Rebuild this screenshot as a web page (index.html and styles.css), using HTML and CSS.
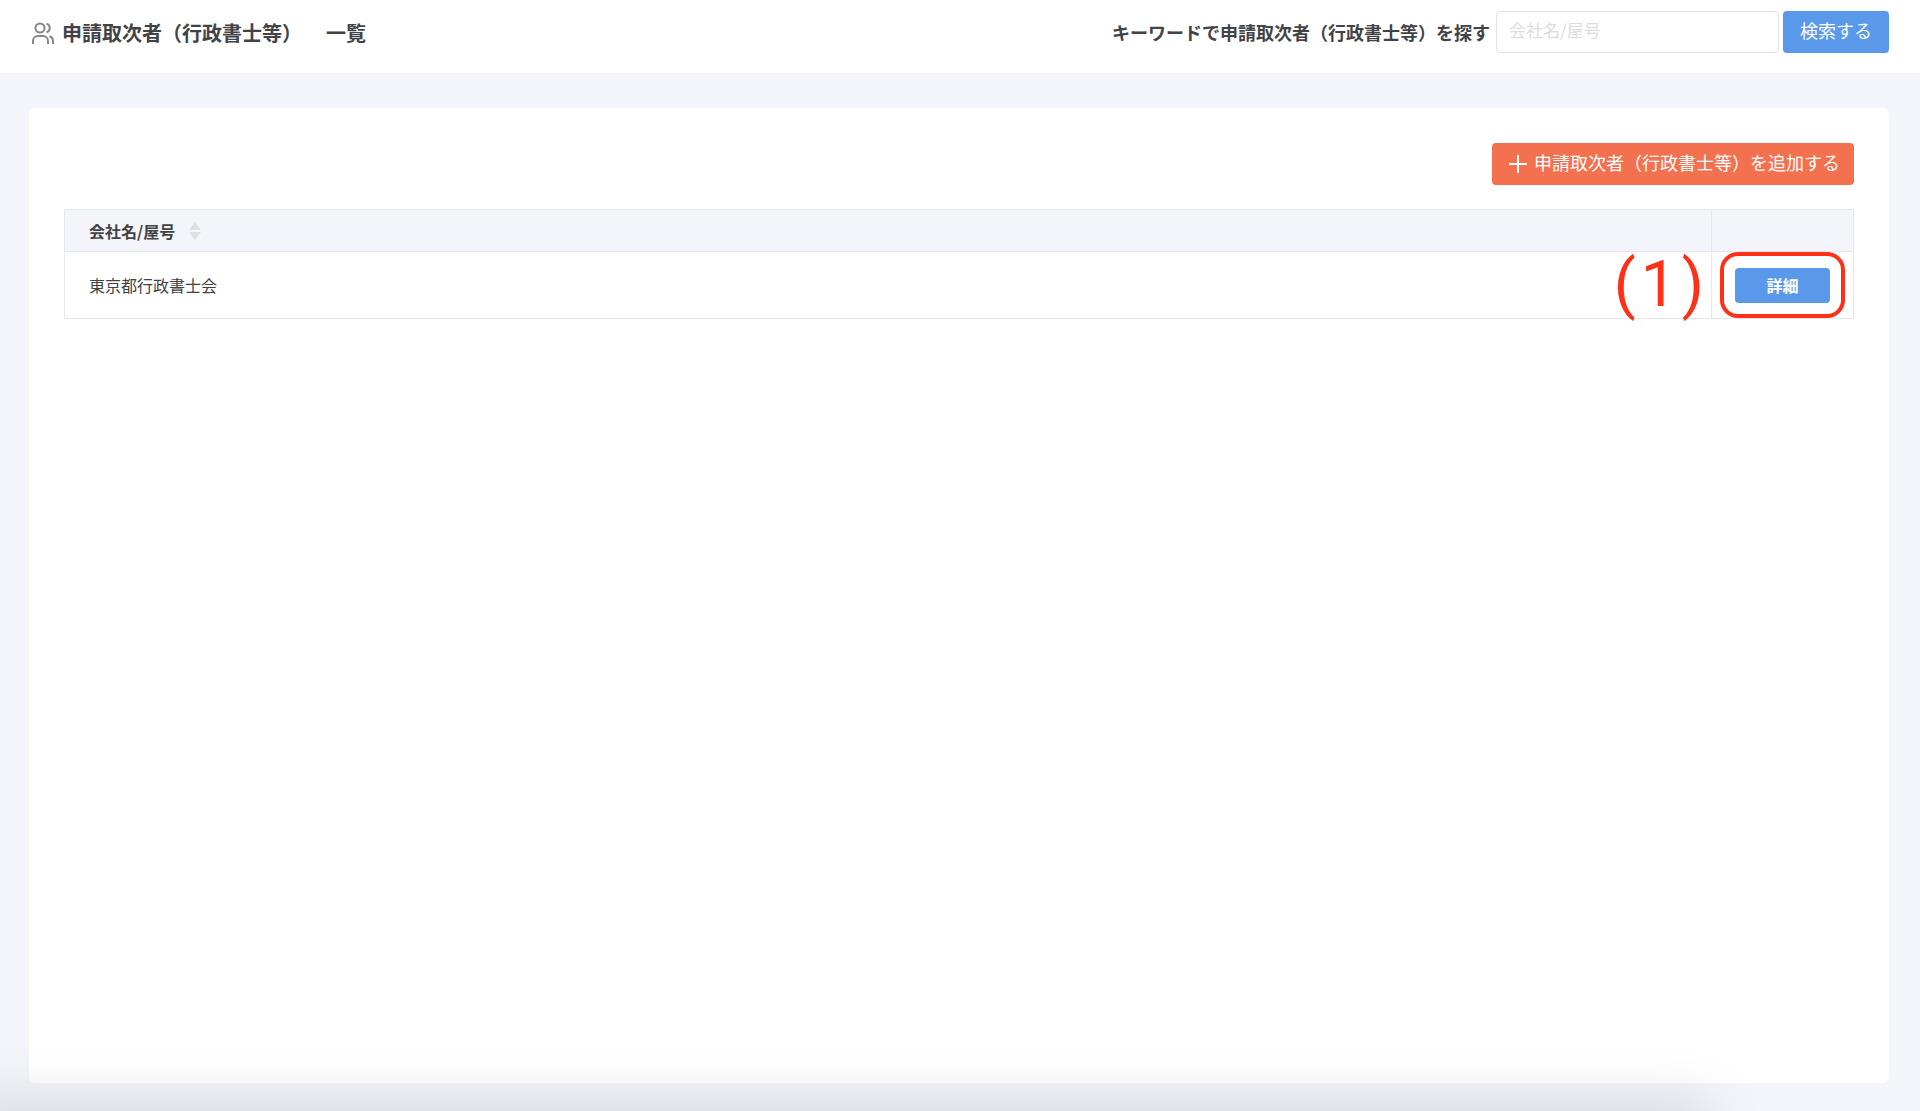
FILE: index.html
```html
<!DOCTYPE html>
<html lang="ja">
<head>
	<meta charset="UTF-8">
	<title>申請取次者（行政書士等） 一覧</title>
	<link rel="stylesheet" href="styles.css">
</head>
<body>
	<header class="header">
		<div class="heading">
			<svg class="icon-users" viewBox="0 0 24 24" width="24" height="24" aria-hidden="true">
				<path d="M18 23v-3a5 5 0 0 0-5-5H8a5 5 0 0 0-5 5v3"/>
				<circle cx="10" cy="7" r="4.600"/>
				<path d="M23 23v-3a5 5 0 0 0-3.500-4.700"/>
				<path d="M16.500 2.600a4.600 4.600 0 0 1 0 8.800"/>
			</svg>
			<h1 class="title">申請取次者（行政書士等）</h1>
			<span class="title sub">一覧</span>
		</div>
		<form class="search">
			<label for="keyword">キーワードで申請取次者（行政書士等）を探す</label>
			<input type="text" id="keyword" placeholder="会社名/屋号">
			<button type="button" class="btn btn-search">検索する</button>
		</form>
	</header>

	<main class="card">
		<div class="toolbar">
			<button type="button" class="btn btn-add">
				<svg viewBox="0 0 20 20" width="20" height="20" aria-hidden="true">
					<path d="M10 1v18M1 10h18"/>
				</svg>
				<span>申請取次者（行政書士等）を追加する</span>
			</button>
		</div>
		<table class="list">
			<thead>
				<tr>
					<th>
						<span class="sort">会社名/屋号
							<svg viewBox="0 0 12 20" width="12" height="20" aria-hidden="true">
								<path d="M6 1l6 8H0zM6 19l6-8H0z"/>
							</svg>
						</span>
					</th>
					<th class="action"></th>
				</tr>
			</thead>
			<tbody>
				<tr>
					<td>東京都行政書士会</td>
					<td class="action">
						<div class="mark">
							<button type="button" class="btn btn-detail">詳細</button>
							<div class="mark-no"><span>(</span><span>1</span><span>)</span></div>
						</div>
					</td>
				</tr>
			</tbody>
		</table>
	</main>
	<div class="shade"></div>
</body>
</html>
```

FILE: styles.css
```css
*{
	box-sizing: border-box;
}
body,h1{
	margin: 0;
	padding: 0;
}
body{
	min-height: 100vh;
	display: flex;
	flex-direction: column;
	background: #f4f5fa;
	color: #414347;
	font-family: "Noto Sans CJK JP", sans-serif;
	font-size: 16px;
	overflow: hidden;
}
input,button{
	font-family: inherit;
}

/* header */
.header{
	display: flex;
	justify-content: space-between;
	height: 73px;
	padding: 11px 31px 0 30px;
	background: #fff;
}
.heading{
	display: flex;
	align-items: center;
	height: 44px;
}
.icon-users{
	margin-right: 8px;
	fill: none;
	stroke: #85878c;
	stroke-width: 2;
}
.title{
	font-size: 20px;
	font-weight: bold;
	line-height: 44px;
}
.sub{
	margin-left: 24px;
}
.search{
	display: flex;
	height: 42px;
}
.search label{
	margin-right: 6px;
	font-size: 18px;
	font-weight: bold;
	line-height: 42px;
}
.search input{
	width: 283px;
	height: 42px;
	margin-right: 4px;
	padding: 0 12px 6px;
	border: 1px solid #e3e4e9;
	border-radius: 4px;
	font-size: 17px;
}
.search input::placeholder{
	color: #dcdde1;
}

/* buttons */
.btn{
	padding: 0;
	border: 0;
	border-radius: 4px;
	background: #5a98e9;
	color: #fff;
	cursor: pointer;
}
.btn-search{
	width: 106px;
	height: 42px;
	padding-bottom: 4px;
	font-size: 18px;
}
.btn-add{
	display: flex;
	align-items: center;
	gap: 6px;
	height: 42px;
	padding: 0 14px 0 16px;
	background: #f3714f;
	font-size: 18px;
}
.btn-add span{
	padding-bottom: 4px;
}
.btn-add svg{
	fill: none;
	stroke: #fff;
	stroke-width: 2;
}
.btn-detail{
	width: 95px;
	height: 35px;
	font-size: 16px;
	font-weight: bold;
}

/* card */
.card{
	flex: 1;
	margin: 35px 31px 28px 29px;
	padding: 35px;
	border-radius: 6px;
	background: #fff;
}
.toolbar{
	display: flex;
	justify-content: flex-end;
	margin-bottom: 24px;
}
.list{
	width: 100%;
	border-collapse: collapse;
	table-layout: fixed;
}
.list th,.list td{
	padding: 0 0 0 24px;
	border: 1px solid #e6e7ec;
	text-align: left;
}
.list th{
	height: 42px;
	background: #f4f5fa;
}
.list td{
	height: 67px;
}
.list .action{
	width: 142px;
	padding: 0;
}
.sort{
	display: flex;
	align-items: center;
	gap: 14px;
}
.sort svg{
	fill: #dedfe2;
}

/* red marker around the detail button */
.mark{
	position: relative;
	display: flex;
	align-items: center;
	justify-content: center;
	width: 125px;
	height: 66px;
	margin: 0 auto;
	border: 4px solid #ff3018;
	border-radius: 18px;
}
.mark-no{
	position: absolute;
	right: 100%;
	margin-right: 20px;
	display: flex;
	gap: 5px;
	color: #ff3018;
	font-family: Roboto, sans-serif;
	font-size: 64px;
	line-height: 64px;
}

/* soft shadow along the bottom edge */
.shade{
	position: fixed;
	left: -40px;
	right: 220px;
	bottom: -40px;
	height: 40px;
	box-shadow: 0 0 60px 10px rgba(0,0,0,.12);
	pointer-events: none;
}
```
